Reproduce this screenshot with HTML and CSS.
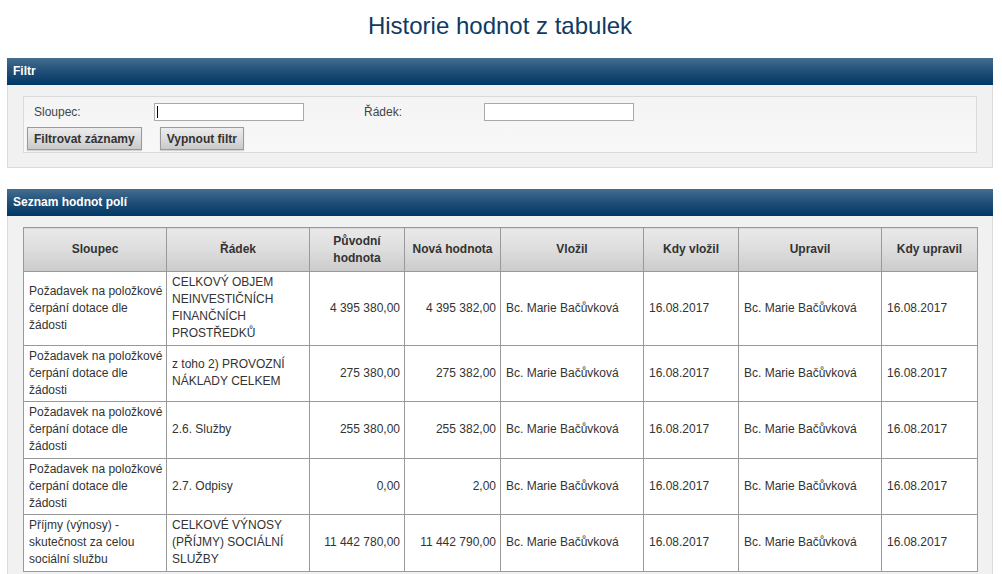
FILE: index.html
```html
<!DOCTYPE html>
<html lang="cs">
<head>
<meta charset="utf-8">
<title>Historie hodnot z tabulek</title>
<link rel="stylesheet" href="styles.css">
</head>
<body>
<div class="page">
  <h1 class="title">Historie hodnot z tabulek</h1>

  <section class="panel">
    <div class="panel-head">Filtr</div>
    <div class="panel-body">
      <div class="filter-box">
        <div class="filter-row">
          <label class="flabel">Sloupec:</label>
          <div class="fcell"><input class="finput focused" type="text"><span class="caret"></span></div>
          <label class="flabel">Řádek:</label>
          <div class="fcell"><input class="finput" type="text"></div>
        </div>
        <div class="btn-row">
          <button class="btn">Filtrovat záznamy</button>
          <button class="btn">Vypnout filtr</button>
        </div>
      </div>
    </div>
  </section>

  <section class="panel panel-list">
    <div class="panel-head">Seznam hodnot polí</div>
    <div class="panel-body list-body">
      <table class="grid">
        <thead>
          <tr>
            <th class="c-col">Sloupec</th>
            <th class="c-row">Řádek</th>
            <th class="c-num">Původní<br>hodnota</th>
            <th class="c-num2">Nová hodnota</th>
            <th class="c-user">Vložil</th>
            <th class="c-date">Kdy vložil</th>
            <th class="c-user">Upravil</th>
            <th class="c-date2">Kdy upravil</th>
          </tr>
        </thead>
        <tbody>
          <tr>
            <td>Požadavek na položkové čerpání dotace dle žádosti</td>
            <td>CELKOVÝ OBJEM NEINVESTIČNÍCH FINANČNÍCH PROSTŘEDKŮ</td>
            <td class="num">4 395 380,00</td>
            <td class="num">4 395 382,00</td>
            <td>Bc. Marie Bačůvková</td>
            <td>16.08.2017</td>
            <td>Bc. Marie Bačůvková</td>
            <td>16.08.2017</td>
          </tr>
          <tr>
            <td>Požadavek na položkové čerpání dotace dle žádosti</td>
            <td>z toho 2) PROVOZNÍ NÁKLADY CELKEM</td>
            <td class="num">275 380,00</td>
            <td class="num">275 382,00</td>
            <td>Bc. Marie Bačůvková</td>
            <td>16.08.2017</td>
            <td>Bc. Marie Bačůvková</td>
            <td>16.08.2017</td>
          </tr>
          <tr>
            <td>Požadavek na položkové čerpání dotace dle žádosti</td>
            <td>2.6. Služby</td>
            <td class="num">255 380,00</td>
            <td class="num">255 382,00</td>
            <td>Bc. Marie Bačůvková</td>
            <td>16.08.2017</td>
            <td>Bc. Marie Bačůvková</td>
            <td>16.08.2017</td>
          </tr>
          <tr>
            <td>Požadavek na položkové čerpání dotace dle žádosti</td>
            <td>2.7. Odpisy</td>
            <td class="num">0,00</td>
            <td class="num">2,00</td>
            <td>Bc. Marie Bačůvková</td>
            <td>16.08.2017</td>
            <td>Bc. Marie Bačůvková</td>
            <td>16.08.2017</td>
          </tr>
          <tr>
            <td>Příjmy (výnosy) - skutečnost za celou sociální službu</td>
            <td>CELKOVÉ VÝNOSY (PŘÍJMY) SOCIÁLNÍ SLUŽBY</td>
            <td class="num">11 442 780,00</td>
            <td class="num">11 442 790,00</td>
            <td>Bc. Marie Bačůvková</td>
            <td>16.08.2017</td>
            <td>Bc. Marie Bačůvková</td>
            <td>16.08.2017</td>
          </tr>
        </tbody>
      </table>
    </div>
  </section>
</div>
</body>
</html>
```
FILE: styles.css
```css
* { box-sizing: border-box; }

html, body {
  margin: 0;
  padding: 0;
  background: #ffffff;
  overflow: hidden;
}

body {
  font-family: "Liberation Sans", Arial, Helvetica, sans-serif;
  font-size: 12px;
  color: #333333;
}

.page {
  padding: 10px 9px 0 7px;
}

.title {
  margin: 0 0 16px;
  font-size: 24px;
  line-height: 32px;
  font-weight: normal;
  text-align: center;
  color: #0f3a62;
}

.panel {
  width: 986px;
}

.panel-list {
  margin-top: 21px;
}

.panel-head {
  height: 27px;
  padding: 0 6px;
  line-height: 27px;
  font-weight: bold;
  font-size: 12px;
  color: #ffffff;
  background: linear-gradient(to bottom, #436e8f 0%, #23517a 45%, #003865 100%);
}

.panel-body {
  background: #f1f1f1;
  border: 1px solid #dcdcdc;
  border-top: none;
  padding: 11px 15px 14px;
}

.filter-box {
  background: linear-gradient(to bottom, #f4f4f4, #f8f8f8);
  border: 1px solid #dadada;
  height: 57px;
  padding: 6px 3px 0;
}

.filter-row {
  display: grid;
  grid-template-columns: 127px 203px 127px 150px;
  align-items: center;
  height: 18px;
}

.flabel {
  padding-left: 7px;
  font-size: 12px;
  color: #444444;
}

.fcell {
  position: relative;
  height: 18px;
}

.finput {
  display: block;
  width: 150px;
  height: 18px;
  margin: 0;
  border: 1px solid #a9a9a9;
  background: #ffffff;
  padding: 0 3px;
  font-family: inherit;
  font-size: 12px;
}

.caret {
  position: absolute;
  left: 3px;
  top: 3px;
  width: 1px;
  height: 12px;
  background: #000000;
}

.btn-row {
  display: flex;
  gap: 18px;
  margin-top: 6px;
}

.btn {
  height: 23px;
  margin: 0;
  padding: 0 6px;
  border: 1px solid #9a9a9a;
  background: linear-gradient(to bottom, #ececec 0%, #dcdcdc 50%, #c9c9c9 100%);
  box-shadow: 0 1px 1px rgba(0, 0, 0, 0.15);
  font-family: inherit;
  font-size: 12px;
  font-weight: bold;
  color: #333333;
}

.list-body {
  padding: 11px 15px 20px;
}

.grid {
  width: 954px;
  border-collapse: collapse;
  table-layout: fixed;
  background: #ffffff;
}

.grid th,
.grid td {
  border: 1px solid #999999;
  line-height: 17px;
  vertical-align: middle;
}

.grid th {
  height: 44px;
  padding: 2px 4px;
  font-weight: bold;
  text-align: center;
  color: #333333;
  background: linear-gradient(to bottom, #e9e9e9 0%, #dddddd 50%, #cbcbcb 100%);
}

.grid td {
  padding: 2px 1px 2.5px 5px;
  text-align: left;
  color: #333333;
}

.grid td.num {
  text-align: right;
  padding-right: 4px;
}

.c-col, .c-row, .c-user { width: 143px; }
.c-num, .c-date { width: 95px; }
.c-num2, .c-date2 { width: 96px; }
```
